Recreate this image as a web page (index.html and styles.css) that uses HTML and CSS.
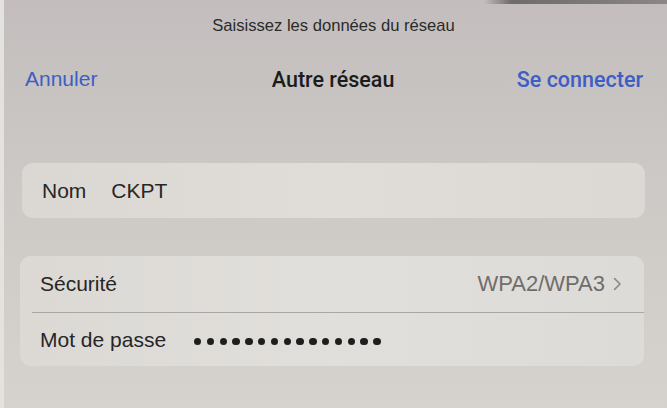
FILE: index.html
```html
<!DOCTYPE html>
<html lang="fr">
<head>
<meta charset="utf-8">
<title>Autre réseau</title>
<link rel="stylesheet" href="styles.css">
</head>
<body>
<div class="screen">
  <div class="topline"></div>
  <div class="prompt">Saisissez les données du réseau</div>
  <div class="nav">
    <span class="nav-btn">Annuler</span>
    <span class="nav-title">Autre réseau</span>
    <span class="nav-btn strong">Se connecter</span>
  </div>
  <div class="card card-name">
    <div class="row">
      <span class="label">Nom</span>
      <span class="value">CKPT</span>
    </div>
  </div>
  <div class="card card-sec">
    <div class="row row-sec">
      <span class="label">Sécurité</span>
      <span class="detail">WPA2/WPA3
        <svg class="chev" width="9" height="14" viewBox="0 0 9 14"><path d="M1.5 1.5 L7 7 L1.5 12.5" fill="none" stroke="#8a8886" stroke-width="1.6" stroke-linecap="round" stroke-linejoin="round"/></svg>
      </span>
    </div>
    <div class="sep"></div>
    <div class="row row-pass">
      <span class="label">Mot de passe</span>
      <span class="dots"><i></i><i></i><i></i><i></i><i></i><i></i><i></i><i></i><i></i><i></i><i></i><i></i><i></i><i></i><i></i></span>
    </div>
  </div>
</div>
</body>
</html>
```
FILE: styles.css
```css
html, body {
  margin: 0;
  padding: 0;
}
body {
  width: 667px;
  height: 408px;
  overflow: hidden;
  font-family: "Liberation Sans", Arial, sans-serif;
  color: #262626;
}
.screen {
  position: relative;
  width: 667px;
  height: 408px;
  box-sizing: border-box;
  padding-left: 4px;
  background: linear-gradient(180deg, #c3bebd 0%, #c9c5c3 30%, #cfccc8 60%, #d6d3ce 100%);
  border-left: 4px solid #e4e2df;
}
.topline {
  position: absolute;
  top: 0;
  left: 480px;
  right: 0;
  height: 4px;
  background: linear-gradient(90deg, rgba(90,90,90,0) 0%, #6d6b6b 15%, #8a8786 100%);
}
.prompt {
  padding-top: 16px;
  text-align: center;
  font-size: 16.6px;
  line-height: 20px;
  color: #2b2a2a;
  margin-left: -8px;
}
.nav {
  display: flex;
  justify-content: space-between;
  align-items: center;
  margin-top: 28px;
  padding: 0 24px 0 17px;
  height: 30px;
  font-size: 21px;
}
.nav-btn {
  color: #3d5ec4;
}
.nav-btn.strong {
  font-family: Roboto, "Liberation Sans", sans-serif;
  font-weight: 500;
  font-size: 21.5px;
}
.nav-title {
  font-family: Roboto, "Liberation Sans", sans-serif;
  font-weight: 500;
  font-size: 21.5px;
  color: #1c1c1c;
  margin-left: 52px;
}
.card {
  border-radius: 11px;
  background: #dedbd7;
}
.card-name {
  margin: 69px 22px 0 14px;
  height: 55px;
  display: flex;
  align-items: center;
  background: linear-gradient(90deg, #dbd8d4, #e0ddd9 50%, #dcd9d5);
}
.row {
  display: flex;
  align-items: center;
  width: 100%;
  box-sizing: border-box;
  padding: 0 20px;
  font-size: 21px;
}
.card-name .row {
  padding-left: 20px;
}
.card-name .value {
  margin-left: 25px;
}
.card-sec {
  margin: 38px 23px 0 12px;
  height: 110px;
  background: linear-gradient(90deg, #dcd9d5, #e1dfdb 50%, #dddbd7);
}
.row-sec {
  height: 56px;
  justify-content: space-between;
  padding-right: 22px;
}
.detail {
  display: flex;
  align-items: center;
  gap: 8px;
  font-size: 22px;
  color: #6f6d6c;
}
.sep {
  height: 1px;
  margin-left: 12px;
  background: #a9a6a3;
}
.row-pass {
  height: 53px;
}
.dots {
  display: flex;
  gap: 5.5px;
  margin-left: 28px;
  margin-top: 4px;
}
.dots i {
  width: 7.3px;
  height: 7.3px;
  border-radius: 50%;
  background: #1e1e1e;
}
```
